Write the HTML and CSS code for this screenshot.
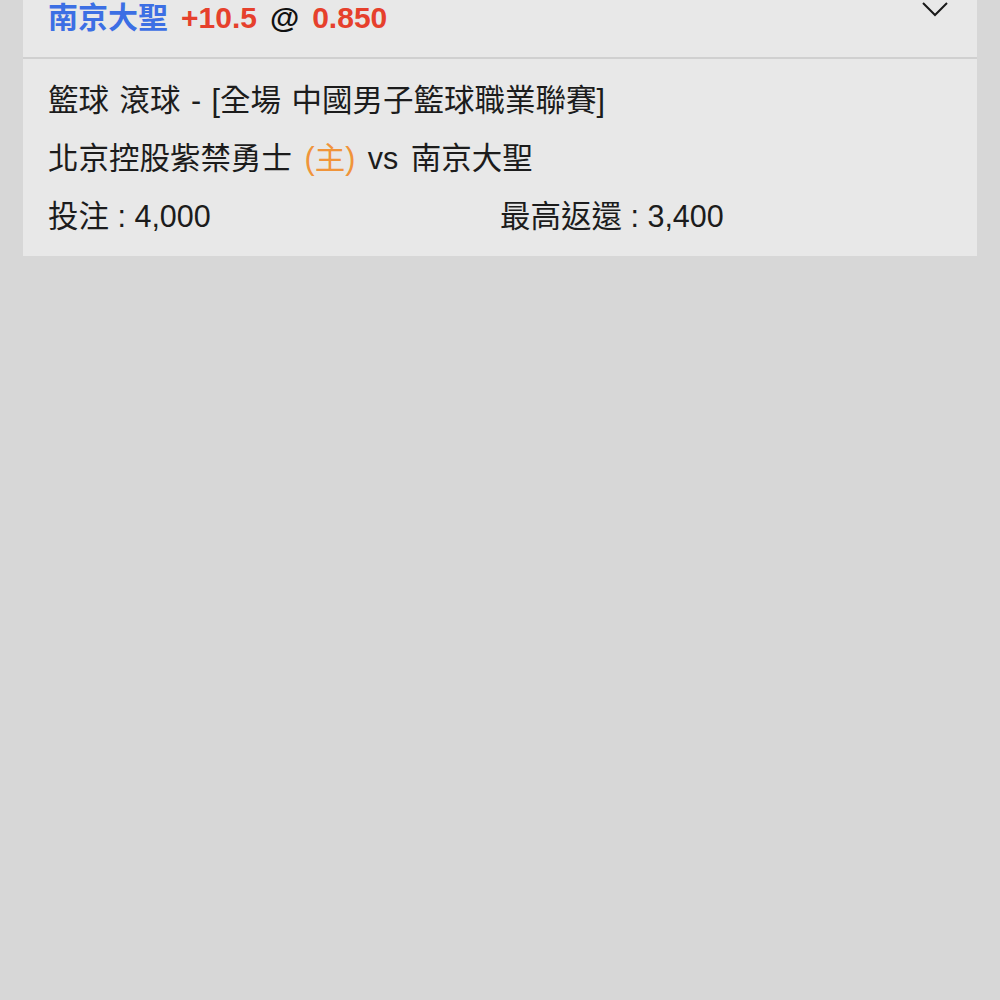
FILE: index.html
```html
<!DOCTYPE html>
<html lang="zh-Hant">
<head>
<meta charset="utf-8">
<link rel="stylesheet" href="styles.css">
</head>
<body>
<div class="card">
  <div class="card-head">
    <div class="selection">
      <span class="team">南京大聖</span>
      <span class="handicap">+10.5</span>
      <span class="at">@</span>
      <span class="odds">0.850</span>
    </div>
    <svg class="chevron" width="28" height="16" viewBox="0 0 28 16">
      <path d="M2 2 L14 14 L26 2" fill="none" stroke="#1a1a1a" stroke-width="2"/>
    </svg>
  </div>
  <div class="card-body">
    <div class="row league">籃球 滾球 - [全場 中國男子籃球職業聯賽]</div>
    <div class="row match">北京控股紫禁勇士 <span class="home">(主)</span> vs 南京大聖</div>
    <div class="row split">
      <span>投注 : 4,000</span>
      <span>最高返還 : 3,400</span>
    </div>
  </div>
</div>
</body>
</html>
```
FILE: styles.css
```css
html, body {
  margin: 0;
  padding: 0;
  background: #d7d7d7;
  height: 100%;
}
body {
  font-family: "Liberation Sans", "Noto Sans CJK TC", sans-serif;
  color: #1c1c1c;
}
.card {
  margin: 0 23px;
  background: #e8e8e8;
}
.card-head {
  height: 57px;
  border-bottom: 2px solid #d0d0d0;
  padding: 0 28px 0 25px;
  display: flex;
  justify-content: space-between;
  align-items: flex-start;
}
.selection {
  font-size: 30px;
  line-height: 36px;
  font-weight: bold;
  display: flex;
  gap: 13px;
}
.team { color: #3c6fe4; }
.handicap, .odds { color: #e6402c; }
.at { color: #111; }
.chevron {
  margin-top: 1px;
}
.card-body {
  padding: 12px 25px 11px;
}
.row {
  font-size: 30.5px;
  line-height: 58px;
  white-space: nowrap;
}
.league { word-spacing: 2px; }
.match { word-spacing: 4px; }
.home { color: #f0943a; }
.split {
  display: grid;
  grid-template-columns: 1fr 1fr;
}
```
